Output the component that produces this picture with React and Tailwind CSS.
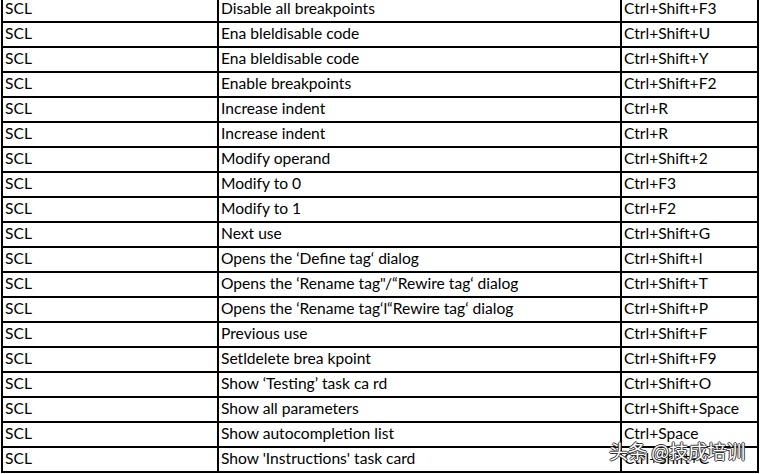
import React from 'react';

const rows = [
  ['SCL', 'Disable all breakpoints', 'Ctrl+Shift+F3'],
  ['SCL', 'Ena bleldisable code', 'Ctrl+Shift+U'],
  ['SCL', 'Ena bleldisable code', 'Ctrl+Shift+Y'],
  ['SCL', 'Enable breakpoints', 'Ctrl+Shift+F2'],
  ['SCL', 'Increase indent', 'Ctrl+R'],
  ['SCL', 'Increase indent', 'Ctrl+R'],
  ['SCL', 'Modify operand', 'Ctrl+Shift+2'],
  ['SCL', 'Modify to 0', 'Ctrl+F3'],
  ['SCL', 'Modify to 1', 'Ctrl+F2'],
  ['SCL', 'Next use', 'Ctrl+Shift+G'],
  ['SCL', 'Opens the \u2018Define tag\u2018 dialog', 'Ctrl+Shift+l'],
  ['SCL', 'Opens the \u2018Rename tag"/\u201cRewire tag\u2018 dialog', 'Ctrl+Shift+T'],
  ['SCL', 'Opens the \u2018Rename tag\u2018l\u201cRewire tag\u2018 dialog', 'Ctrl+Shift+P'],
  ['SCL', 'Previous use', 'Ctrl+Shift+F'],
  ['SCL', 'Setldelete brea kpoint', 'Ctrl+Shift+F9'],
  ['SCL', 'Show \u2018Testing\u2019 task ca rd', 'Ctrl+Shift+O'],
  ['SCL', 'Show all parameters', 'Ctrl+Shift+Space'],
  ['SCL', 'Show autocompletion list', 'Ctrl+Space'],
  ['SCL', "Show 'Instructions' task card", 'Ctrl+Shift+C'],
];

const App = () => {
  return (
    <div className="relative w-[761px] h-[474px] overflow-hidden bg-white font-['Lato','Noto_Sans',sans-serif] text-[15.6px] text-black">
      <div className="ml-[1px] -mt-[2px] w-[758px] border-l-2 border-black">
        {rows.map((r, i) => (
          <div key={i} className="flex h-[25px] border-b-2 border-black">
            <div className="w-[216px] border-r-2 border-black pl-[2px] flex items-center leading-none pb-[1px]">{r[0]}</div>
            <div className="w-[403px] border-r-2 border-black pl-[2px] flex items-center leading-none pb-[1px]">{r[1]}</div>
            <div className="flex-1 border-r-2 border-black pl-[2px] flex items-center leading-none pb-[1px]">{r[2]}</div>
          </div>
        ))}
      </div>

      {/* watermark */}
      <div className="absolute left-[609px] top-[441px] text-[19px] leading-none text-white font-['Noto_Sans_CJK_SC',sans-serif] [text-shadow:1px_0_0_#333,-1px_0_0_#333,0_1px_0_#333,0_-1px_0_#333]">
        头条 @技成培训
      </div>
    </div>
  );
};

export default App;
